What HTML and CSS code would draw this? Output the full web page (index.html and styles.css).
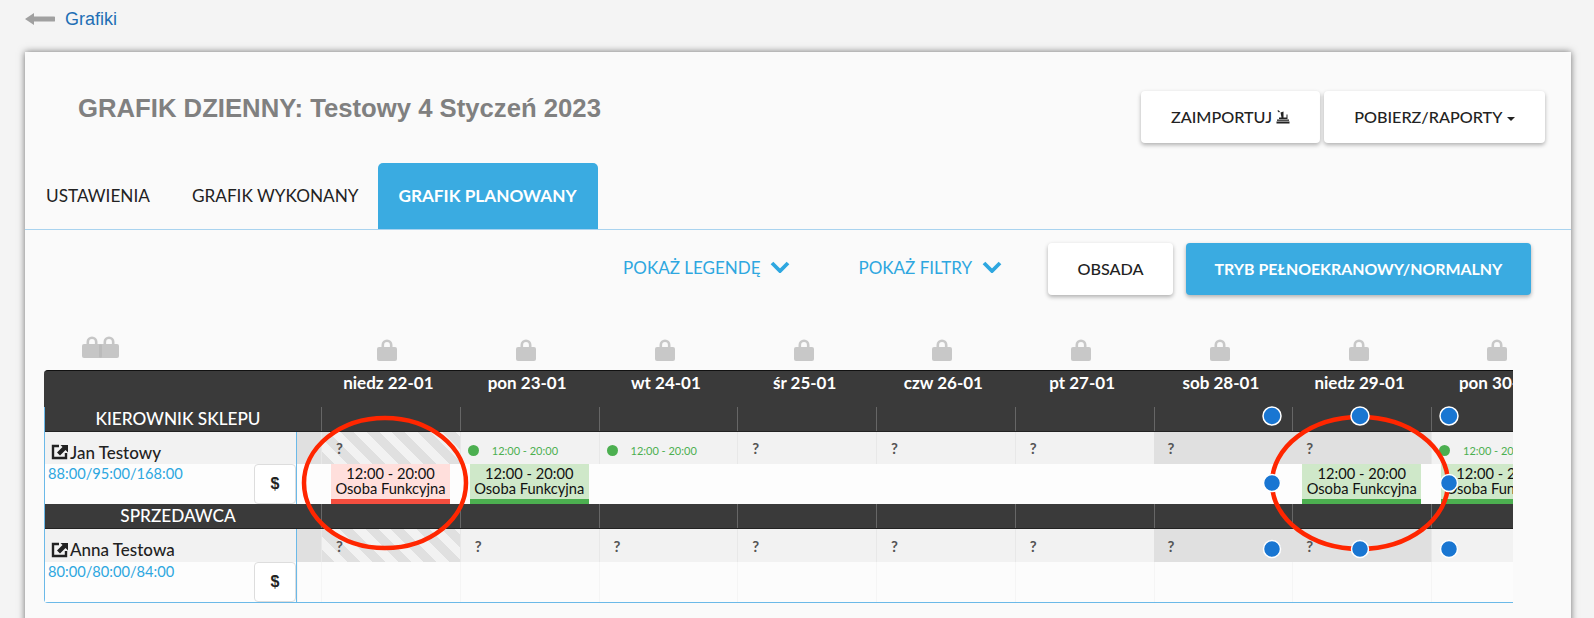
FILE: index.html
```html
<!DOCTYPE html>
<html lang="pl">
<head>
<meta charset="utf-8">
<title>Grafik dzienny</title>
<link rel="stylesheet" href="styles.css">
</head>
<body>
<svg class="defs" width="0" height="0" aria-hidden="true">
  <defs>
    <symbol id="lock" viewBox="0 0 20 22">
      <path d="M4.500 9V6a5.500 5.500 0 0 1 11 0v3h-2.600V6a2.900 2.900 0 0 0-5.800 0v3z" fill="currentColor"/>
      <rect x="0" y="8" width="20" height="14" rx="2" fill="currentColor"/>
    </symbol>
    <symbol id="ext" viewBox="0 0 18 16">
      <path d="M8 2H2v12h13V9" fill="none" stroke="#222" stroke-width="2.400"/>
      <path d="M9.500 1h7.500v7.500l-2.500-2.500-5.500 5.500-3-3 5.500-5.500z" fill="#222"/>
    </symbol>
  </defs>
</svg>
<nav class="back">
  <svg class="back-arrow" width="30" height="14" viewBox="0 0 30 14"><path d="M0 7 9 1v3.500h19.500a2.500 2.500 0 0 1 0 5H9V13z" fill="#a0a0a0"/></svg>
  <a class="back-link">Grafiki</a>
</nav>
<main class="card">
  <header class="head">
    <h1 class="title">GRAFIK DZIENNY: Testowy 4 Styczeń 2023</h1>
    <div class="head-actions">
      <button class="btn btn-import">ZAIMPORTUJ
        <svg width="14" height="15" viewBox="0 0 14 14"><path d="M2 0.500 4 2 3 3 1.500 1.500zM4.500 3l3-1v6h3V5h1v4.500H3V8h2.500z" fill="#222"/><rect x="1" y="10" width="12" height="1.300" fill="#222"/><rect x="0.500" y="12" width="13" height="2" fill="#222"/></svg>
      </button>
      <button class="btn btn-report">POBIERZ/RAPORTY <span class="caret"></span></button>
    </div>
  </header>
  <div class="tabs">
    <a class="tab">USTAWIENIA</a>
    <a class="tab">GRAFIK WYKONANY</a>
    <a class="tab tab-active">GRAFIK PLANOWANY</a>
  </div>
  <div class="toolbar">
    <a class="toggle toggle-legend">POKAŻ LEGENDĘ <svg width="20" height="12" viewBox="0 0 20 12"><path d="M2 2l8 8 8-8" fill="none" stroke="#2ea7e0" stroke-width="3.800"/></svg></a>
    <a class="toggle toggle-filter">POKAŻ FILTRY <svg width="20" height="12" viewBox="0 0 20 12"><path d="M2 2l8 8 8-8" fill="none" stroke="#2ea7e0" stroke-width="3.800"/></svg></a>
    <button class="btn btn-obsada">OBSADA</button>
    <button class="btn btn-primary">TRYB PEŁNOEKRANOWY/NORMALNY</button>
  </div>
  <section class="sched">
    <div class="locks">
      <div class="lock-all">
        <svg width="20" height="22"><use href="#lock"/></svg><svg width="20" height="22"><use href="#lock"/></svg>
      </div>
      <span></span>
      <div class="lock"><svg width="20" height="22"><use href="#lock"/></svg></div>
      <div class="lock"><svg width="20" height="22"><use href="#lock"/></svg></div>
      <div class="lock"><svg width="20" height="22"><use href="#lock"/></svg></div>
      <div class="lock"><svg width="20" height="22"><use href="#lock"/></svg></div>
      <div class="lock"><svg width="20" height="22"><use href="#lock"/></svg></div>
      <div class="lock"><svg width="20" height="22"><use href="#lock"/></svg></div>
      <div class="lock"><svg width="20" height="22"><use href="#lock"/></svg></div>
      <div class="lock"><svg width="20" height="22"><use href="#lock"/></svg></div>
      <div class="lock"><svg width="20" height="22"><use href="#lock"/></svg></div>
    </div>
    <div class="days">
      <span></span><span></span>
      <div class="day">niedz 22-01</div><div class="day">pon 23-01</div><div class="day">wt 24-01</div><div class="day">śr 25-01</div><div class="day">czw 26-01</div><div class="day">pt 27-01</div><div class="day">sob 28-01</div><div class="day">niedz 29-01</div><div class="day">pon 30-01</div>
    </div>
    <div class="body">
      <div class="grid role">
        <div class="role-name">KIEROWNIK SKLEPU</div>
        <i></i><i></i><i></i><i></i><i></i><i></i><i></i><i></i><i></i>
      </div>
      <div class="grid">
        <div class="person">
          <div class="person-top"><svg width="18" height="16"><use href="#ext"/></svg>Jan Testowy</div>
          <div class="person-bottom"><span class="hours">88:00/95:00/168:00</span><button class="pay">$</button></div>
        </div>
        <div class="cell"><div class="top off"></div><div class="bot"></div></div>
        <div class="cell"><div class="top hatch"><b>?</b></div><div class="bot"><div class="shift shift-red">12:00 - 20:00<br>Osoba Funkcyjna</div></div></div>
        <div class="cell"><div class="top plan"><em></em><small>12:00 - 20:00</small></div><div class="bot"><div class="shift shift-green">12:00 - 20:00<br>Osoba Funkcyjna</div></div></div>
        <div class="cell"><div class="top plan"><em></em><small>12:00 - 20:00</small></div><div class="bot"></div></div>
        <div class="cell"><div class="top"><b>?</b></div><div class="bot"></div></div>
        <div class="cell"><div class="top"><b>?</b></div><div class="bot"></div></div>
        <div class="cell"><div class="top"><b>?</b></div><div class="bot"></div></div>
        <div class="cell"><div class="top off"><b>?</b></div><div class="bot"></div></div>
        <div class="cell"><div class="top off"><b>?</b></div><div class="bot"><div class="shift shift-green">12:00 - 20:00<br>Osoba Funkcyjna</div></div></div>
        <div class="cell"><div class="top plan"><em></em><small>12:00 - 20:00</small></div><div class="bot"><div class="shift shift-green">12:00 - 20:00<br>Osoba Funkcyjna</div></div></div>
      </div>
      <div class="grid role">
        <div class="role-name">SPRZEDAWCA</div>
        <i></i><i></i><i></i><i></i><i></i><i></i><i></i><i></i><i></i>
      </div>
      <div class="grid row-last">
        <div class="person">
          <div class="person-top"><svg width="18" height="16"><use href="#ext"/></svg>Anna Testowa</div>
          <div class="person-bottom"><span class="hours">80:00/80:00/84:00</span><button class="pay">$</button></div>
        </div>
        <div class="cell"><div class="top off"></div><div class="bot faint"></div></div>
        <div class="cell"><div class="top hatch"><b>?</b></div><div class="bot faint"></div></div>
        <div class="cell"><div class="top"><b>?</b></div><div class="bot faint"></div></div>
        <div class="cell"><div class="top"><b>?</b></div><div class="bot faint"></div></div>
        <div class="cell"><div class="top"><b>?</b></div><div class="bot faint"></div></div>
        <div class="cell"><div class="top"><b>?</b></div><div class="bot faint"></div></div>
        <div class="cell"><div class="top"><b>?</b></div><div class="bot faint"></div></div>
        <div class="cell"><div class="top off"><b>?</b></div><div class="bot faint"></div></div>
        <div class="cell"><div class="top off"><b>?</b></div><div class="bot faint"></div></div>
        <div class="cell"><div class="top"></div><div class="bot faint"></div></div>
      </div>
    </div>
    <svg class="marks" width="1469" height="273" viewBox="44 336 1469 273">
      <ellipse cx="385" cy="484" rx="81" ry="65" fill="none" stroke="#ff2600" stroke-width="4.500"/>
      <ellipse cx="1360" cy="484" rx="88" ry="66" fill="none" stroke="#ff2600" stroke-width="4.500"/>
      <g fill="#1976d2" stroke="#fff" stroke-width="1.500">
        <circle cx="1272" cy="417" r="9"/><circle cx="1360" cy="417" r="9"/><circle cx="1449" cy="417" r="9"/>
        <circle cx="1272" cy="484" r="8.500"/><circle cx="1449" cy="484" r="8.500"/>
        <circle cx="1272" cy="550" r="8.500"/><circle cx="1360" cy="550" r="8.500"/><circle cx="1449" cy="550" r="8.500"/>
      </g>
    </svg>
  </section>
</main>
</body>
</html>
```
FILE: styles.css
```css
* { box-sizing: border-box; }
html, body { height: 618px; overflow: hidden; }
body {
  margin: 0;
  background: #f4f4f4;
  font-family: "Lato", "Liberation Sans", sans-serif;
  color: #222;
}
.defs { position: absolute; }
button { font-family: inherit; cursor: pointer; }

.back {
  height: 52px;
  padding: 0 0 14px 25px;
  display: flex;
  align-items: center;
  gap: 10px;
}
.back-link {
  font-family: "Liberation Sans", sans-serif;
  font-size: 18px;
  color: #1e6fb5;
}

.card {
  margin-left: 25px;
  width: 1546px;
  height: 640px;
  background: #fafafa;
  box-shadow: 0 0 7px rgba(0, 0, 0, .55);
}

.head {
  height: 111px;
  padding: 39px 26px 0 53px;
  display: flex;
  justify-content: space-between;
  align-items: flex-start;
}
.title {
  margin: 0;
  font-family: "Liberation Sans", sans-serif;
  font-size: 25.700px;
  line-height: 34px;
  font-weight: 700;
  color: #808080;
}
.head-actions { display: flex; gap: 4px; }

.btn {
  height: 52px;
  padding: 0 0 2px;
  border: 0;
  border-radius: 4px;
  background: #fff;
  color: #222;
  font-size: 16.200px;
  font-weight: 500;
  box-shadow: 0 2px 4px rgba(0, 0, 0, .3);
}
.btn-import { width: 179px; }
.btn-report { width: 221px; }
.btn-obsada { width: 125px; margin-left: 46px; }
.btn-primary {
  width: 345px;
  margin-left: 13px;
  background: #3aabe1;
  color: #fff;
  font-size: 15.900px;
  font-weight: 700;
}
.btn-import svg { vertical-align: -1px; }
.caret {
  display: inline-block;
  vertical-align: 2px;
  margin-left: 1px;
  border-top: 4px solid #222;
  border-left: 4.500px solid transparent;
  border-right: 4.500px solid transparent;
}

.tabs {
  height: 67px;
  padding-left: 21px;
  display: flex;
  align-items: stretch;
  border-bottom: 1px solid #a9d3ef;
}
.tab {
  display: flex;
  align-items: center;
  padding-bottom: 2px;
  font-size: 17.200px;
  color: #222;
  margin-right: 42px;
}
.tab-active {
  width: 220px;
  margin-left: -23px;
  margin-right: 0;
  justify-content: center;
  background: #3aabe1;
  color: #fff;
  font-weight: 700;
  border-radius: 5px 5px 0 0;
}

.toolbar {
  padding: 13px 40px 0 0;
  display: flex;
  justify-content: flex-end;
  align-items: flex-start;
}
.toggle {
  height: 48px;
  display: flex;
  align-items: center;
  gap: 10px;
  font-size: 17px;
  color: #2ea7e0;
}
.toggle-filter { margin-left: 68px; }

.sched {
  position: relative;
  width: 1469px;
  height: 273px;
  margin: 40px 0 0 19px;
  overflow: hidden;
}
.locks, .days, .grid {
  display: grid;
  grid-template-columns: 253px 24px repeat(9, 138.750px);
}
.locks { height: 35px; color: #c8c8c8; }
.lock { display: flex; justify-content: center; padding: 4px 6px 0 0; }
.lock svg { display: block; }
.lock-all { padding: 1px 0 0 38px; display: flex; color: #b8b8b8; }
.lock-all svg { display: block; opacity: .78; }
.lock-all svg + svg { margin-left: -3px; }

.days {
  height: 37px;
  background: #3a3a3a;
  border-top: 1px solid #111;
  border-radius: 4px 0 0 0;
}
.day {
  padding: 1px 4px 0 0;
  text-align: center;
  font-size: 17px;
  font-weight: 700;
  line-height: 22px;
  color: #fff;
  white-space: nowrap;
}

.body {
  border-left: 1px solid #6bb9e8;
  border-bottom: 1px solid #6bb9e8;
  border-radius: 0 0 0 4px;
}
.body .grid { grid-template-columns: 252px 24px repeat(9, 138.750px); }

.role {
  height: 25px;
  background: #3a3a3a;
  border-bottom: 1px solid #222;
  color: #fff;
}
.role i { border-left: 1px solid #666; }
.role-name {
  grid-column: 1 / 3;
  padding-right: 10px;
  text-align: center;
  font-size: 17.200px;
  line-height: 24px;
  font-weight: 500;
}

.person {
  border-right: 1px solid #6bb9e8;
  display: flex;
  flex-direction: column;
}
.person-top {
  height: 32px;
  padding: 8px 0 0 6px;
  display: flex;
  align-items: center;
  background: #f2f2f2;
  font-size: 17px;
  font-weight: 500;
  color: #222;
}
.person-top svg { margin-right: 1px; }
.person-bottom {
  height: 40px;
  padding-left: 3px;
  display: flex;
  justify-content: space-between;
  background: #fdfdfd;
}
.hours { font-size: 14.670px; line-height: 20px; color: #2ea7e0; }
.pay {
  width: 42px;
  height: 40px;
  padding: 0;
  border: 1px solid #ddd;
  border-radius: 4px;
  background: #fff;
  font-family: "Liberation Sans", sans-serif;
  font-size: 16px;
  font-weight: 700;
  color: #222;
}

.cell { display: flex; flex-direction: column; }
.top {
  height: 32px;
  padding-left: 14px;
  display: flex;
  align-items: center;
  gap: 13px;
  background: #f2f2f2;
  border-left: 1px solid #e8e8e8;
}
.row-last .top, .row-last .person-top { height: 33px; }
.top b { font-size: 15px; color: #555; }
.top em {
  width: 11px;
  height: 11px;
  margin-left: 0;
  border-radius: 50%;
  background: #4caf50;
}
.top small { font-size: 11px; color: #4caf50; white-space: nowrap; }
.off { background: #e0e0e0; border-left: 0; }
.plan { padding-left: 7px; padding-top: 4px; }
.hatch {
  background: repeating-linear-gradient(45deg, #e0e0e0 0 9px, #f2f2f2 9px 18px);
}
.bot {
  height: 40px;
  padding-left: 10px;
  background: #fdfdfd;
}
.faint { background: #fcfcfc; border-left: 1px solid #f5f5f5; }
.shift {
  width: 119px;
  height: 40px;
  padding-top: 2px;
  font-size: 14.670px;
  line-height: 15px;
  text-align: center;
  color: #111;
  white-space: nowrap;
  overflow: hidden;
}
.shift-red { background: #ffdfdc; border-bottom: 5px solid #f44e3f; }
.shift-green { background: #cfe8c9; border-bottom: 5px solid #4caf50; }

.marks { position: absolute; left: 0; top: 0; pointer-events: none; }
```
